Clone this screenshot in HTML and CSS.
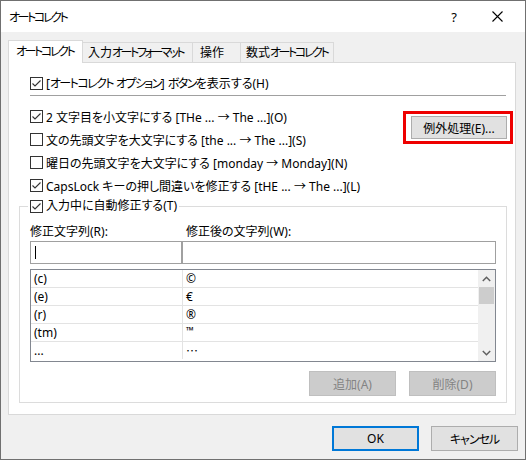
FILE: index.html
```html
<!DOCTYPE html>
<html lang="ja">
<head>
<meta charset="utf-8">
<title>オートコレクト</title>
<link rel="stylesheet" href="styles.css">
</head>
<body>
<div class="window">
  <div class="titlebar">
    <span class="title"><span class="k">オートコレクト</span></span>
    <span class="help">?</span>
    <span class="close"><svg width="11" height="11" viewBox="0 0 11 11"><path d="M0.5 0.5 L10.5 10.5 M10.5 0.5 L0.5 10.5" stroke="#000" stroke-width="1.1" fill="none"/></svg></span>
  </div>
  <div class="client">
    <div class="tabs">
      <div class="tab active"><span class="k">オートコレクト</span></div>
      <div class="tab t2">入力<span class="k">オートフォーマット</span></div>
      <div class="tab t3">操作</div>
      <div class="tab t4">数式<span class="k">オートコレクト</span></div>
    </div>
    <div class="panel">
      <div class="row first">
        <span class="cb checked"><svg width="13" height="13" viewBox="0 0 13 13"><path d="M2.5 6.5 L5 9 L10.5 3.5" stroke="#333" stroke-width="1.1" fill="none"/></svg></span>
        <span>[<span class="k2">オートコレクト</span> <span class="k2">オプション</span>] <span class="k2">ボタン</span>を表示する(H)</span>
      </div>
      <div class="sep"></div>
      <div class="section">
        <div class="options">
          <div class="row">
            <span class="cb checked"><svg width="13" height="13" viewBox="0 0 13 13"><path d="M2.5 6.5 L5 9 L10.5 3.5" stroke="#333" stroke-width="1.1" fill="none"/></svg></span>
            <span>2 文字目を小文字にする [THe ... → The ...](O)</span>
          </div>
          <div class="row">
            <span class="cb"></span>
            <span>文の先頭文字を大文字にする [the ... → The ...](S)</span>
          </div>
          <div class="row">
            <span class="cb"></span>
            <span>曜日の先頭文字を大文字にする [monday → Monday](N)</span>
          </div>
          <div class="row">
            <span class="cb checked"><svg width="13" height="13" viewBox="0 0 13 13"><path d="M2.5 6.5 L5 9 L10.5 3.5" stroke="#333" stroke-width="1.1" fill="none"/></svg></span>
            <span>CapsLock キーの押し間違いを修正する [tHE ... → The ...](L)</span>
          </div>
        </div>
        <div class="highlight">
          <div class="btn exc">例外処理(E)...</div>
        </div>
      </div>
      <fieldset class="group">
        <legend class="legend">
          <span class="cb checked"><svg width="13" height="13" viewBox="0 0 13 13"><path d="M2.5 6.5 L5 9 L10.5 3.5" stroke="#333" stroke-width="1.1" fill="none"/></svg></span>
          <span>入力中に自動修正する(T)</span>
        </legend>
        <div class="labels">
          <span class="lab1">修正文字列(R):</span>
          <span class="lab2">修正後の文字列(W):</span>
        </div>
        <div class="inputs">
          <div class="input in1"><span class="caret"></span></div>
          <div class="input in2"></div>
        </div>
        <div class="list">
          <div class="rows">
            <div class="lrow"><span class="c1">(c)</span><span class="c2">©</span></div>
            <div class="lrow"><span class="c1">(e)</span><span class="c2">€</span></div>
            <div class="lrow"><span class="c1">(r)</span><span class="c2">®</span></div>
            <div class="lrow"><span class="c1">(tm)</span><span class="c2 tm">™</span></div>
            <div class="lrow last"><span class="c1">...</span><span class="c2">⋯</span></div>
          </div>
          <div class="scrollbar">
            <div class="arrow"><svg width="9" height="6" viewBox="0 0 9 6"><path d="M0.8 5 L4.5 1.3 L8.2 5" stroke="#606060" stroke-width="1.5" fill="none"/></svg></div>
            <div class="thumb"></div>
            <div class="track"></div>
            <div class="arrow"><svg width="9" height="6" viewBox="0 0 9 6"><path d="M0.8 1 L4.5 4.7 L8.2 1" stroke="#606060" stroke-width="1.5" fill="none"/></svg></div>
          </div>
        </div>
        <div class="actions">
          <div class="btn disabled">追加(A)</div>
          <div class="btn disabled">削除(D)</div>
        </div>
      </fieldset>
    </div>
    <div class="footer">
      <div class="btn ok">OK</div>
      <div class="btn"><span class="k1">キャンセル</span></div>
    </div>
  </div>
</div>
</body>
</html>
```

FILE: styles.css
```css
* { box-sizing: border-box; }
html, body { margin: 0; padding: 0; background: #ffffff; }
body {
  font-family: "Noto Sans", "Noto Sans CJK JP", sans-serif;
  font-size: 12px;
  font-feature-settings: "palt" 1;
  color: #000;
}
.k { letter-spacing: -2.4px; }
.k2 { letter-spacing: -1.6px; }
.k1 { letter-spacing: -1px; }
.window {
  width: 526px;
  height: 460px;
  border: 1px solid #707070;
  display: flex;
  flex-direction: column;
}
.titlebar {
  height: 31px;
  background: #fff;
  display: flex;
  align-items: center;
  padding-left: 8px;
  flex: none;
}
.title { flex: 1; font-size: 12px; }
.help { width: 14px; text-align: center; margin-right: 31px; font-size: 13px; }
.close { width: 11px; height: 11px; margin-right: 22px; display: flex; }
.client {
  flex: 1;
  background: #f0f0f0;
  padding: 8px 0 0 7px;
}
.tabs {
  display: flex;
  align-items: flex-end;
  height: 22px;
}
.tab {
  height: 20px;
  line-height: 19px;
  border-top: 1px solid #d9d9d9;
  border-right: 1px solid #d9d9d9;
  background: #f0f0f0;
  padding: 0 0 0 5px;
  white-space: nowrap;
  overflow: hidden;
  flex: none;
}
.tab.active {
  height: 23px;
  margin-bottom: -1px;
  position: relative;
  z-index: 1;
  background: #fff;
  border-left: 1px solid #d9d9d9;
  line-height: 21px;
  padding: 0 0 0 7px;
  width: 75px;
}
.tab.t2 { width: 110px; }
.tab.t3 { width: 48px; padding-left: 7px; }
.tab.t4 { width: 93px; }
.panel {
  width: 508px;
  height: 353px;
  background: #fff;
  border: 1px solid #d9d9d9;
  padding: 10px 8px 0 21px;
}
.row {
  display: flex;
  align-items: center;
  height: 23px;
  white-space: nowrap;
}
.row.first { height: 20px; }
.cb {
  width: 13px;
  height: 13px;
  border: 1px solid #333;
  background: #fff;
  margin-right: 3px;
  flex: none;
  display: flex;
  align-items: center;
  justify-content: center;
}
.cb svg { display: block; flex: none; }
.sep {
  height: 1px;
  background: #a0a0a0;
  margin-top: 2px;
  margin-right: 1px;
}
.section {
  display: flex;
  margin-top: 9px;
}
.options { flex: 1; }
.highlight {
  align-self: flex-start;
  margin-top: 6px;
  margin-right: -6px;
  border: 3px solid #ee0000;
  padding: 2px 3px 2px 5px;
}
.btn {
  height: 25px;
  width: 87px;
  border: 1px solid #adadad;
  background: #e1e1e1;
  display: flex;
  align-items: center;
  justify-content: center;
  white-space: nowrap;
}
.btn.exc { width: 96px; height: 23px; }
.group {
  margin: 0 0 0 -11px;
  width: 488px;
  border: 1px solid #dcdcdc;
  padding: 0 9px 6px 10px;
  min-width: 0;
}
.legend {
  display: flex;
  align-items: center;
  line-height: 18px;
  padding: 0 2px;
  margin-left: -2px;
}
.labels {
  display: flex;
  margin-top: 6px;
  height: 20px;
  align-items: center;
  white-space: nowrap;
}
.lab1 { width: 156px; }
.inputs {
  display: flex;
  height: 23px;
}
.input {
  height: 23px;
  border: 1px solid #a0a0a0;
  background: #fff;
}
.in1 { width: 152px; padding: 4px 0 0 4px; }
.in2 { width: 314px; margin-left: 0; }
.caret { display: block; width: 1px; height: 13px; background: #000; }
.list {
  margin-top: 5px;
  width: 466px;
  height: 93px;
  border: 1px solid #828790;
  display: flex;
}
.rows { flex: 1; }
.lrow {
  display: flex;
  height: 18px;
  border-bottom: 1px solid #e3e3e3;
  align-items: center;
  font-size: 12px;
}
.lrow.last { border-bottom: none; height: 17px; }
.c1 {
  width: 152px;
  height: 100%;
  padding-left: 3px;
  border-right: 1px solid #e3e3e3;
  display: flex;
  align-items: center;
}
.c2 { padding-left: 3px; }
.tm { font-size: 10px; margin-top: -6px; }
.scrollbar {
  width: 17px;
  background: #f0f0f0;
  display: flex;
  flex-direction: column;
  align-items: center;
}
.arrow {
  height: 17px;
  width: 17px;
  display: flex;
  align-items: center;
  justify-content: center;
}
.thumb {
  width: 15px;
  height: 17px;
  background: #cdcdcd;
}
.track { flex: 1; }
.actions {
  display: flex;
  justify-content: flex-end;
  gap: 13px;
  margin-top: 9px;
  padding-right: 1px;
}
.btn.disabled {
  width: 87px;
  background: #cccccc;
  border-color: #bfbfbf;
  color: #838383;
}
.footer {
  display: flex;
  justify-content: flex-end;
  gap: 12px;
  margin-top: 11px;
  padding-right: 7px;
}
.btn.ok {
  border: 2px solid #0078d7;
}
```
